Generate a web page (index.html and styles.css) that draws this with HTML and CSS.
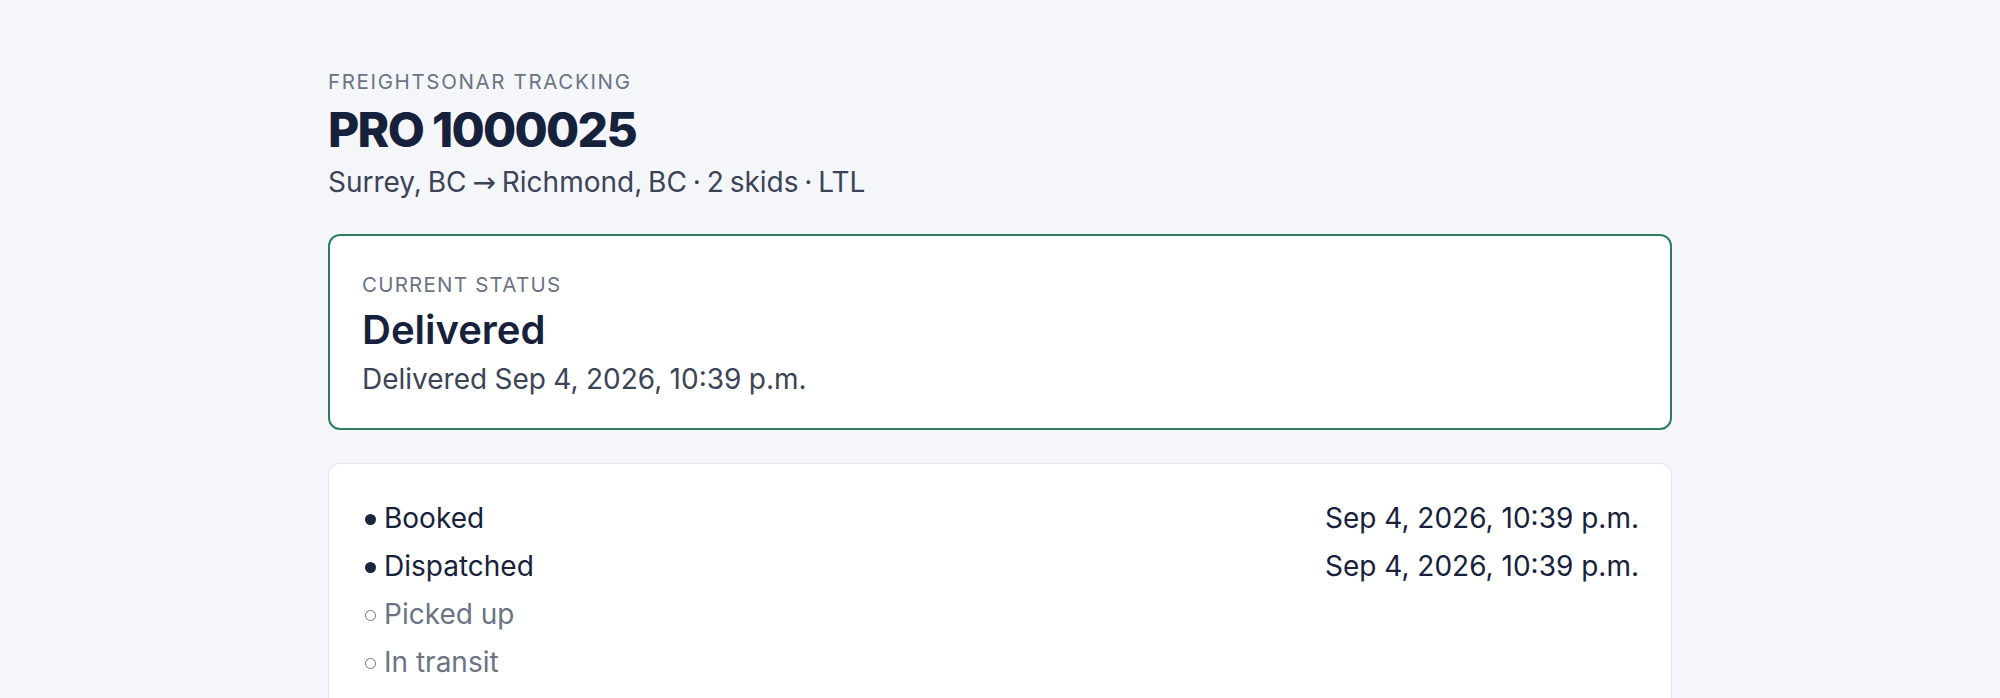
FILE: index.html
```html
<!DOCTYPE html>
<html lang="en">
<head>
<meta charset="utf-8">
<title>PRO 1000025 · FreightSonar Tracking</title>
<link rel="stylesheet" href="styles.css">
</head>
<body>
<main class="page">
  <header class="head">
    <div class="eyebrow">FreightSonar Tracking</div>
    <h1 class="title">PRO 1000025</h1>
    <p class="route">Surrey, BC <span class="arrow">→</span> Richmond, BC · 2 skids · LTL</p>
  </header>

  <section class="card status">
    <div class="status-label">Current status</div>
    <h2 class="status-value">Delivered</h2>
    <p class="status-detail">Delivered Sep 4, 2026, 10:39 p.m.</p>
  </section>

  <section class="card events">
    <ul class="timeline">
      <li class="event done"><span class="event-name"><span class="mark"></span>Booked</span><span class="event-time">Sep 4, 2026, 10:39 p.m.</span></li>
      <li class="event done"><span class="event-name"><span class="mark"></span>Dispatched</span><span class="event-time">Sep 4, 2026, 10:39 p.m.</span></li>
      <li class="event pending"><span class="event-name"><span class="mark"></span>Picked up</span><span class="event-time"></span></li>
      <li class="event pending"><span class="event-name"><span class="mark"></span>In transit</span><span class="event-time"></span></li>
    </ul>
  </section>
</main>
</body>
</html>
```

FILE: styles.css
```css
* { box-sizing: border-box; }

html, body {
  margin: 0;
  padding: 0;
  background: #f4f6fa;
}

body {
  font-family: Inter, "Liberation Sans", sans-serif;
  color: #17213b;
}

.page {
  max-width: 1344px;
  margin: 0 auto;
  padding: 68px 0 40px;
}

.head {
  display: flex;
  flex-direction: column;
}

.eyebrow {
  font-size: 20.5px;
  line-height: 28px;
  text-transform: uppercase;
  letter-spacing: 0.08em;
  color: #6b7385;
}

.title {
  margin: 6px 0 0;
  font-size: 48px;
  line-height: 56px;
  font-weight: 800;
  letter-spacing: -0.035em;
  color: #16213b;
}

.route {
  margin: 6px 0 0;
  font-size: 28px;
  line-height: 36px;
  word-spacing: -2px;
  color: #3b4357;
}

.arrow {
  font-family: "DejaVu Sans", sans-serif;
  font-weight: 400;
}

.card {
  background: #ffffff;
  border-radius: 12px;
}

.status {
  margin-top: 33px;
  border: 2px solid #2f7d5f;
  padding: 35px 32px 31px;
}

.status-label {
  font-size: 20.5px;
  line-height: 28px;
  text-transform: uppercase;
  letter-spacing: 0.06em;
  color: #6b7385;
}

.status-value {
  margin: 7px 0 0;
  font-size: 40px;
  line-height: 48px;
  font-weight: 600;
  color: #17213b;
}

.status-detail {
  margin: 7px 0 0;
  font-size: 28px;
  line-height: 36px;
  word-spacing: -0.5px;
  color: #3b4357;
}

.events {
  margin-top: 33px;
  border: 1px solid #e1e6ee;
  padding: 36px 32px;
}

.timeline {
  list-style: none;
  margin: 0;
  padding: 0;
  display: flex;
  flex-direction: column;
  gap: 12px;
}

.event {
  display: flex;
  justify-content: space-between;
  align-items: center;
  font-size: 28px;
  line-height: 36px;
}

.event-name {
  display: inline-flex;
  align-items: center;
}

.mark {
  width: 11px;
  height: 11px;
  border-radius: 50%;
  margin: 3px 8px 0 4px;
  flex: none;
}

.done { color: #17213b; }
.done .mark { background: #1b2540; }

.pending { color: #6b7385; }
.pending .mark { border: 1.5px solid #6b7385; }

.event-time { color: #17213b; }
```
